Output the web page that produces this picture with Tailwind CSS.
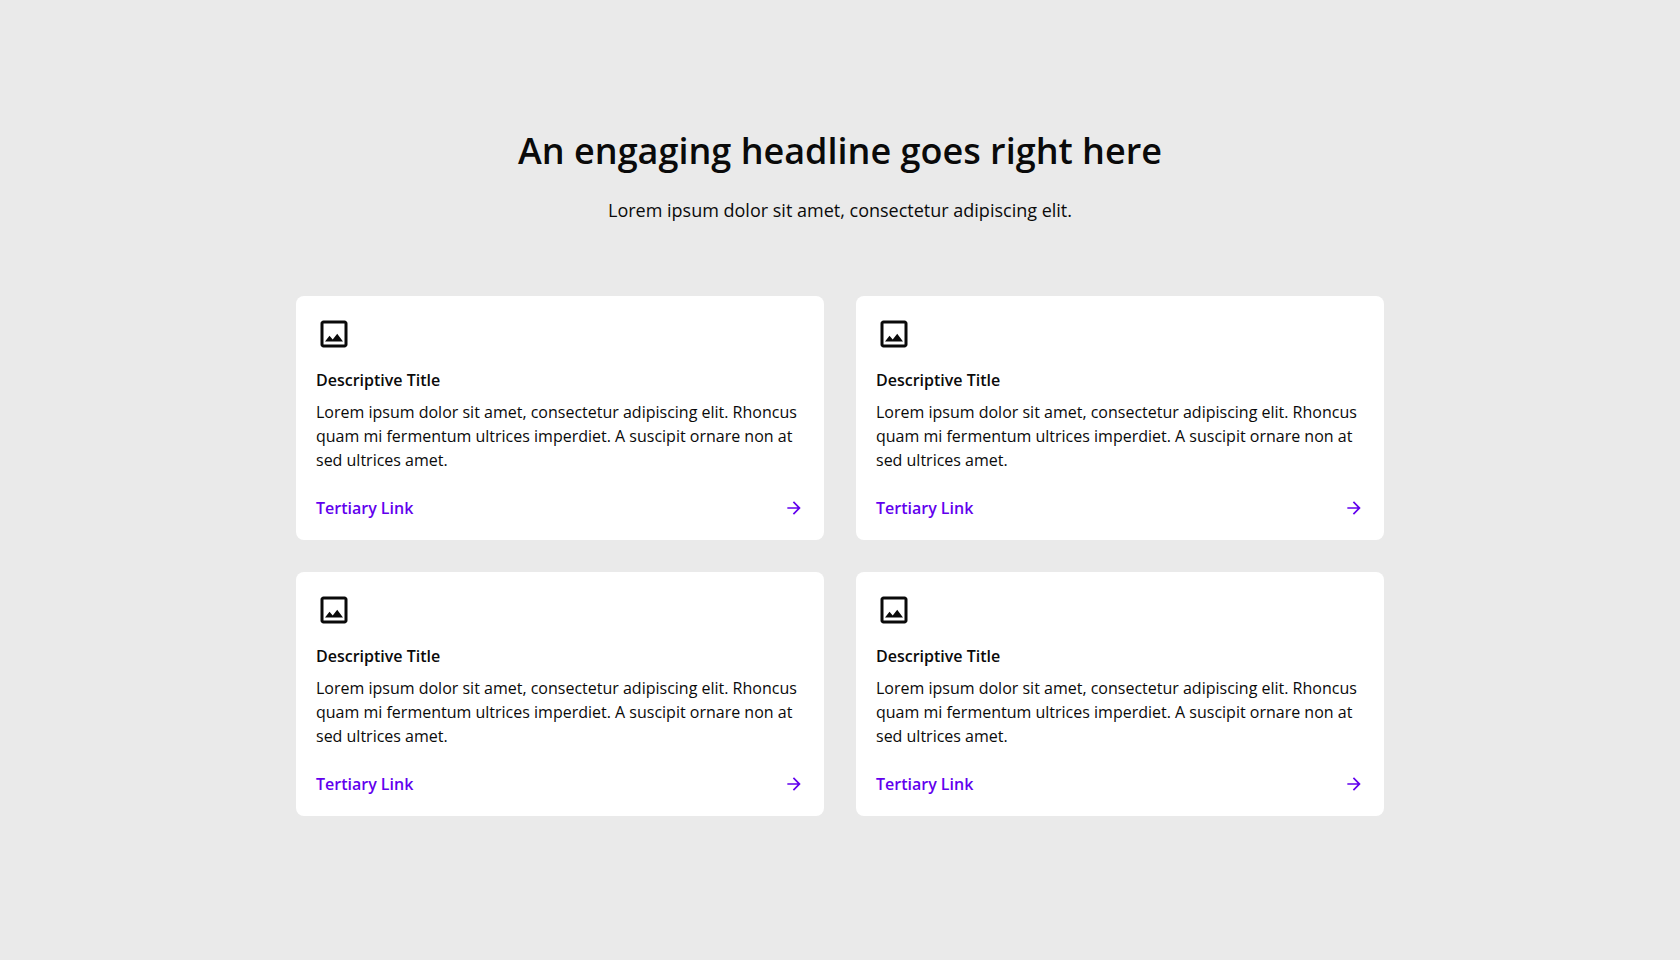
<!DOCTYPE html>
<html lang="en">
<head>
<meta charset="utf-8">
<title>Cards</title>
<script src="https://cdn.jsdelivr.net/npm/@tailwindcss/browser@4"></script>
</head>
<body class="bg-[#eaeaea] text-[#0a0a0a] font-['Open_Sans',sans-serif]">
<svg class="hidden">
  <symbol id="image" viewBox="0 0 24 24"><path d="M19 5v14H5V5h14m0-2H5c-1.1 0-2 .9-2 2v14c0 1.1.9 2 2 2h14c1.1 0 2-.9 2-2V5c0-1.1-.9-2-2-2zm-4.860 8.860l-3 3.870L9 13.140 6 17h12l-3.860-5.140z"/></symbol>
  <symbol id="arrow" viewBox="0 0 24 24"><path d="M12 4l-1.410 1.410L16.170 11H4v2h12.170l-5.580 5.590L12 20l8-8z"/></symbol>
</svg>
<section class="h-[960px] flex flex-col items-center pt-[124px]">
  <h1 class="text-[36px] leading-[54px] font-semibold">An engaging headline goes right here</h1>
  <p class="mt-[19px] text-lg leading-[27px]">Lorem ipsum dolor sit amet, consectetur adipiscing elit.</p>
  <div id="grid" class="mt-[72px] w-[1088px] grid grid-cols-2 gap-8">
    <article class="h-[244px] rounded-lg bg-white p-5 flex flex-col">
      <svg class="size-9 fill-current"><use href="#image"/></svg>
      <h2 class="mt-4 text-base leading-6 font-semibold">Descriptive Title</h2>
      <p class="mt-2 text-base leading-6">Lorem ipsum dolor sit amet, consectetur adipiscing elit. Rhoncus quam mi fermentum ultrices imperdiet. A suscipit ornare non at sed ultrices amet.</p>
      <a class="mt-auto flex items-center justify-between text-base leading-6 font-semibold text-[#6200ee]">Tertiary Link <svg class="size-5 fill-current"><use href="#arrow"/></svg></a>
    </article>
  </div>
</section>
<script>
const grid = document.getElementById('grid');
for (let i = 0; i < 3; i++) grid.append(grid.firstElementChild.cloneNode(true));
</script>
</body>
</html>
